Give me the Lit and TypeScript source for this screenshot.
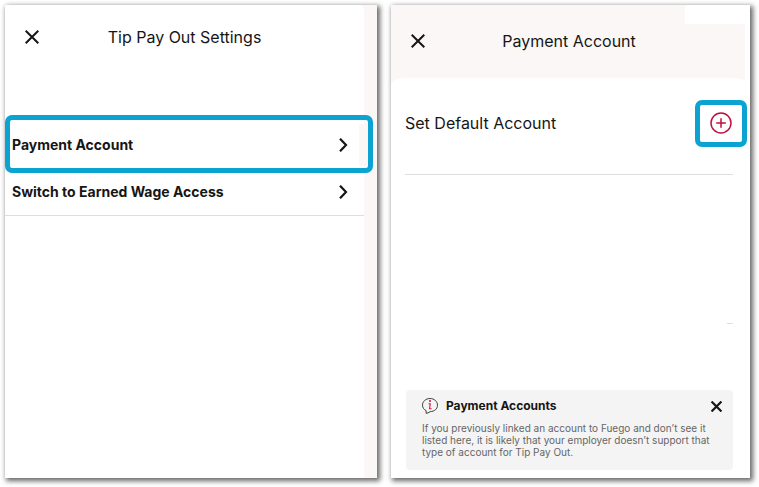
import { LitElement, html, css, svg } from "lit";
import { customElement, property } from "lit/decorators.js";

const strokes: Record<string, unknown> = {
  close: svg`<path d="M.7 .7 13.300 13.300M13.300 .7 .7 13.300" />`,
  chevron: svg`<path d="M4 .7 10 7 4 13.300" />`,
};

@customElement("line-icon")
class LineIcon extends LitElement {
  static styles = css`
    :host { display: block; }
    .icon { display: block; width: 100%; height: 100%; fill: none; stroke: currentColor; }
  `;
  @property() name = "close";
  @property({ type: Number }) weight = 2;
  render() {
    return html`<svg class="icon" viewBox="0 0 14 14" stroke-width=${this.weight} aria-hidden="true">${strokes[this.name]}</svg>`;
  }
}

@customElement("settings-panel")
class SettingsPanel extends LitElement {
  static styles = css`
    :host { display: block; background: #fbf7f6; padding-right: 13px; }
    * { box-sizing: border-box; }
    .page { background: #fff; height: 100%; border-radius: 0 4px 0 0; }
    .header { display: grid; grid-template-columns: 54px 1fr 54px; align-items: center; height: 64px; }
    .title { margin: 0; font-size: 16px; font-weight: 400; line-height: 24px; text-align: center; }
    button { appearance: none; border: 0; background: none; padding: 0; margin: 0; font: inherit; color: inherit; cursor: pointer; }
    .close { width: 14px; height: 14px; justify-self: center; }
    .list { list-style: none; margin: 46px 0 0; padding: 0; border-bottom: 1px solid #dedede; }
    .row { display: flex; align-items: center; justify-content: space-between; width: 100%; height: 42px; padding: 0 14px 0 7px; font-size: 14px; font-weight: 700; line-height: 20px; text-align: left; }
    .item.marked { position: relative; padding: 9px 0 7px; }
    .item.marked .row { border-right: 5px solid #fbf7f6; padding-right: 9px; }
    .item.marked::after { content: ""; position: absolute; inset: 0 -9px 0 0; border: 5px solid #0ba3d1; border-radius: 7px; pointer-events: none; }
    .item.last .row { height: 38px; }
    .item.last { padding-bottom: 4px; }
    .chevron { width: 14px; height: 14px; }
  `;
  render() {
    return html`
      <div class="page">
        <header class="header">
          <button class="close" aria-label="Close"><line-icon name="close"></line-icon></button>
          <h1 class="title">Tip Pay Out Settings</h1>
        </header>
        <ul class="list">
          <li class="item marked"><button class="row">Payment Account<line-icon class="chevron" name="chevron" weight="2.2"></line-icon></button></li>
          <li class="item last"><button class="row">Switch to Earned Wage Access<line-icon class="chevron" name="chevron" weight="2.2"></line-icon></button></li>
        </ul>
      </div>`;
  }
}

@customElement("account-panel")
class AccountPanel extends LitElement {
  static styles = css`
    :host { display: flex; flex-direction: column; background: #fff; }
    * { box-sizing: border-box; }
    button { appearance: none; border: 0; background: none; padding: 0; margin: 0; font: inherit; color: inherit; cursor: pointer; }
    .header { position: relative; display: grid; grid-template-columns: 54px 1fr 52px; align-items: center; height: 79px; margin-right: 5px; padding-bottom: 7px; background: #fbf7f6; }
    .header::after { content: ""; position: absolute; top: 0; right: -5px; width: 65px; height: 19px; background: #fff; }
    .title { margin: 0; font-size: 16px; font-weight: 400; line-height: 24px; text-align: center; }
    .close { width: 14px; height: 14px; justify-self: center; }
    .sheet { position: relative; flex: 1; display: flex; flex-direction: column; margin-top: -6px; padding: 22px 17px 8px 14px; background: #fff; border-radius: 16px 20px 0 0 / 6px 6px 0 0; }
    .default { display: flex; align-items: center; justify-content: space-between; height: 75px; padding-bottom: 28px; border-bottom: 1px solid #dedede; font-size: 16px; line-height: 24px; }
    .add { display: grid; place-items: center; width: 52px; height: 47px; margin-right: -14px; border: 5px solid #0ba3d1; border-radius: 7px; color: #c0103f; }
    .plus { width: 22px; height: 22px; fill: none; stroke: currentColor; stroke-width: 1.5; }
    .stub { align-self: flex-end; width: 6px; height: 1px; margin: 148px 0 0; background: #dedede; }
    .notice { margin: auto 0 0 1px; padding: 8px 11px 11px 16px; background: #f4f4f4; border-radius: 4px; }
    .notice-head { display: flex; align-items: center; gap: 8px; height: 16px; }
    .notice-title { flex: 1; margin: 0; font-size: 12px; font-weight: 700; line-height: 16px; }
    .info { width: 16px; height: 16px; fill: none; stroke: #2a2a2a; }
    .info-mark { stroke: #d21846; }
    .info-dot { fill: #d21846; stroke: none; }
    .dismiss { width: 11px; height: 11px; }
    .text { margin: 8px 0 0; padding-bottom: 1px; color: #666; font-size: 10px; line-height: 12px; }
  `;
  render() {
    return html`
      <header class="header">
        <button class="close" aria-label="Close"><line-icon name="close"></line-icon></button>
        <h1 class="title">Payment Account</h1>
      </header>
      <div class="sheet">
        <div class="default">
          <span>Set Default Account</span>
          <button class="add" aria-label="Add default account">
            <svg class="plus" viewBox="0 0 22 22" aria-hidden="true"><circle cx="11" cy="11" r="10" /><path d="M11 6.200v9.600M6.200 11h9.600" /></svg>
          </button>
        </div>
        <div class="stub"></div>
        <aside class="notice">
          <div class="notice-head">
            <svg class="info" viewBox="0 0 16 16" aria-hidden="true">
              <path d="M4.200 15.400 4.100 12.600C1.900 11.600 .5 9.600 .5 7.200 .5 3.400 3.800 .5 8 .5s7.500 2.900 7.500 6.700-3.200 6.400-7.300 6.400Q5.800 15.200 4.200 15.400Z" stroke-width=".9" />
              <circle class="info-dot" cx="8" cy="3" r="1.100" />
              <path class="info-mark" d="M6.500 5.700h1.700L7.600 10.700h2" stroke-width="1.100" />
            </svg>
            <h2 class="notice-title">Payment Accounts</h2>
            <button class="dismiss" aria-label="Dismiss"><line-icon name="close" weight="2.8"></line-icon></button>
          </div>
          <p class="text">If you previously linked an account to Fuego and don’t see it listed here, it is likely that your employer doesn’t support that type of account for Tip Pay Out.</p>
        </aside>
      </div>`;
  }
}

@customElement("app-root")
class AppRoot extends LitElement {
  static styles = css`
    :host { display: grid; grid-template-columns: 372fr 359fr; gap: 14px; box-sizing: border-box; min-height: 100vh; padding: 5px 9px 9px 5px; background: #fff; color: #161616; font-family: Inter, "Liberation Sans", sans-serif; }
    .panel { box-sizing: border-box; min-width: 0; box-shadow: 2px 2px 5px 1px rgba(0, 0, 0, 0.6); }
  `;
  render() {
    return html`<settings-panel class="panel"></settings-panel><account-panel class="panel"></account-panel>`;
  }
}
